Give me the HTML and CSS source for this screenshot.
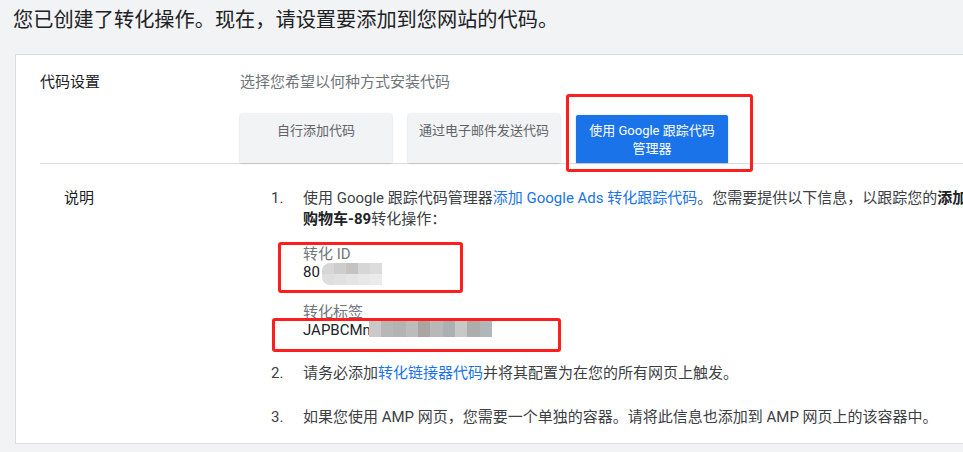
FILE: index.html
```html
<!DOCTYPE html>
<html lang="zh-CN">
<head>
<meta charset="utf-8">
<title>代码设置</title>
<link rel="stylesheet" href="styles.css">
</head>
<body>
<div class="page">
  <h1 class="title">您已创建了转化操作。现在，请设置要添加到您网站的代码。</h1>
  <div class="card">
    <section class="setup">
      <div class="setup-label">代码设置</div>
      <div class="setup-body">
        <div class="hint">选择您希望以何种方式安装代码</div>
        <div class="tabs">
          <div class="tab">自行添加代码</div>
          <div class="tab">通过电子邮件发送代码</div>
          <div class="tab tab-active">使用 Google 跟踪代码<br>管理器<span class="mark mark-tab"></span></div>
        </div>
      </div>
    </section>
    <section class="instr">
      <div class="instr-label">说明</div>
      <ol class="steps">
        <li class="step">
          <span class="num">1.</span>
          <div class="step-body">
            <div class="step-text">使用 Google 跟踪代码管理器<a class="link" href="#">添加 Google Ads 转化跟踪代码</a>。您需要提供以下信息，以跟踪您的<b>添加到</b><br><b>购物车-89</b>转化操作：</div>
            <div class="fields">
              <div class="field">
                <div class="field-label">转化 ID</div>
                <div class="field-value">80<span class="blur blur-id"><i class="c1"></i><i class="c2"></i><i class="c3"></i><i class="c4"></i><i class="c5"></i><i class="d1"></i><i class="d2"></i><i class="d3"></i><i class="d4"></i><i class="d5"></i></span></div>
                <span class="mark mark-id"></span>
              </div>
              <div class="field">
                <div class="field-label">转化标签</div>
                <div class="field-value">JAPBCMn<span class="blur blur-label"><i class="e1"></i><i class="e2"></i><i class="e3"></i><i class="e4"></i><i class="e5"></i><i class="e6"></i><i class="e7"></i><i class="e8"></i><i class="e9"></i><i class="e10"></i></span></div>
                <span class="mark mark-label"></span>
              </div>
            </div>
          </div>
        </li>
        <li class="step">
          <span class="num">2.</span>
          <div class="step-body">
            <div class="step-text">请务必添加<a class="link" href="#">转化链接器代码</a>并将其配置为在您的所有网页上触发。</div>
          </div>
        </li>
        <li class="step">
          <span class="num">3.</span>
          <div class="step-body">
            <div class="step-text">如果您使用 AMP 网页，您需要一个单独的容器。请将此信息也添加到 AMP 网页上的该容器中。</div>
          </div>
        </li>
      </ol>
    </section>
  </div>
</div>
</body>
</html>
```

FILE: styles.css
```css
html, body {
  margin: 0;
  padding: 0;
}
body {
  background: #f1f3f4;
  overflow: hidden;
  font-family: Roboto, "Noto Sans CJK SC", sans-serif;
  color: #202124;
  width: 963px;
  height: 452px;
}
.page {
  display: flex;
  flex-direction: column;
}
.title {
  margin: 0;
  padding: 7px 0 0 13px;
  font-size: 20.2px;
  line-height: 26px;
  font-weight: normal;
  color: #202124;
  white-space: nowrap;
}
.card {
  margin: 21px 0 0 15px;
  width: 1000px;
  background: #fff;
  border: 1px solid #dadce0;
  border-right: none;
  padding-bottom: 15px;
}
.setup {
  display: grid;
  grid-template-columns: 200px 1fr;
  margin-left: 24px;
  padding-top: 17px;
  border-bottom: 1px solid #dadce0;
}
.setup-label {
  font-size: 15px;
  line-height: 20px;
  color: #202124;
}
.setup-body {
  display: flex;
  flex-direction: column;
}
.hint {
  font-size: 15px;
  line-height: 20px;
  color: #70757a;
}
.tabs {
  display: flex;
  gap: 16px;
  margin-top: 22px;
}
.tab {
  position: relative;
  width: 152px;
  height: 49px;
  box-sizing: border-box;
  padding-top: 8px;
  background: #f1f3f4;
  color: #5f6368;
  font-size: 13px;
  line-height: 18px;
  text-align: center;
  box-shadow: 0 0 2px rgba(0, 0, 0, 0.18), 0 1px 2px rgba(0, 0, 0, 0.08);
  border-radius: 2px 2px 0 0;
}
.tab-active {
  background: #1a73e8;
  color: #fff;
  margin-top: 1px;
  height: 48px;
  padding-top: 7px;
}
.mark {
  position: absolute;
  border: 3px solid #ff1e1e;
  border-radius: 3px;
  box-sizing: border-box;
  pointer-events: none;
}
.mark-tab {
  left: -10px;
  top: -21px;
  width: 187px;
  height: 78px;
}
.instr {
  display: grid;
  grid-template-columns: 207px 1fr;
  padding: 24px 0 0 48px;
}
.instr-label {
  font-size: 15px;
  line-height: 21px;
  color: #202124;
}
.steps {
  list-style: none;
  margin: 0;
  padding: 0;
  display: flex;
  flex-direction: column;
}
.step {
  display: flex;
  font-size: 15px;
  line-height: 21px;
  color: #3c4043;
  white-space: nowrap;
}
.step + .step {
  margin-top: 23px;
}
.step:nth-child(2) {
  margin-top: 24px;
}
.num {
  width: 32px;
  flex: none;
}
.step-body {
  display: flex;
  flex-direction: column;
}
.step-text b {
  color: #202124;
}
.link {
  color: #1a73e8;
  text-decoration: none;
}
.fields {
  display: flex;
  flex-direction: column;
  gap: 18px;
  margin-top: 15px;
}
.field {
  position: relative;
  display: flex;
  flex-direction: column;
}
.field-label {
  font-size: 15px;
  line-height: 18px;
  color: #70757a;
}
.field-value {
  display: flex;
  align-items: flex-start;
  font-size: 15px;
  line-height: 18px;
  color: #202124;
}
.blur {
  display: grid;
}
.blur i {
  display: block;
}
.blur-id {
  grid-template-columns: repeat(5, 12px);
  grid-template-rows: 11px 11px;
  margin-left: 2px;
}
.blur-id .c1 { background: #d6d6d6; border-radius: 8px 0 0 0; }
.blur-id .c2 { background: #cdcdcd; }
.blur-id .c3 { background: #c5c3c2; }
.blur-id .c4 { background: #d5d6d8; }
.blur-id .c5 { background: #dcdcdc; }
.blur-id .d1 { background: #dedede; border-radius: 0 0 0 8px; }
.blur-id .d2 { background: #e1e1e1; }
.blur-id .d3 { background: #e4e4e4; }
.blur-id .d4 { background: #e8e8e8; }
.blur-id .d5 { background: #ebebeb; }
.blur-label {
  grid-template-columns: repeat(10, 12.3px);
  grid-template-rows: 17px;
  margin: -1px 0 0 -2px;
}
.blur-label .e1 { background: #c9c9c9; }
.blur-label .e2 { background: #b7b7b7; }
.blur-label .e3 { background: #b3b3b3; }
.blur-label .e4 { background: #bcbcbc; }
.blur-label .e5 { background: #aaa5a2; }
.blur-label .e6 { background: #b8b8b8; }
.blur-label .e7 { background: #adb0b3; }
.blur-label .e8 { background: #c8c8c8; }
.blur-label .e9 { background: #adadad; }
.blur-label .e10 { background: #b1b6ba; }
.mark-id {
  left: -25px;
  top: -3px;
  width: 185px;
  height: 51px;
}
.mark-label {
  left: -31px;
  top: 15px;
  width: 289px;
  height: 34px;
}
```
